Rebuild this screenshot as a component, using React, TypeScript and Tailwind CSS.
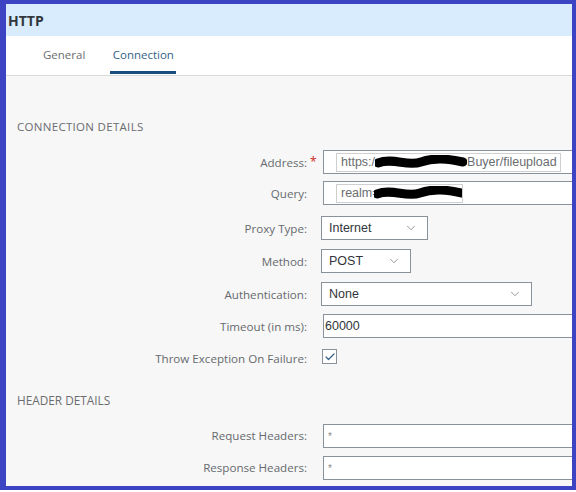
import { Check, ChevronDown } from "lucide-react";

const labelFont = { fontFamily: '"Open Sans", "Noto Sans", sans-serif' };
const fieldFont = { fontFamily: '"Liberation Sans", Arial, sans-serif' };

function Blob({ width }: { width: number }) {
  return (
    <svg width={width} height={14} viewBox={`0 0 ${width} 14`} className="shrink-0">
      <path
        d={`M3 8 C ${width * 0.2} 2, ${width * 0.35} 12, ${width * 0.5} 7 S ${width * 0.8} 4, ${width - 4} 7`}
        stroke="#000"
        strokeWidth={9}
        strokeLinecap="round"
        fill="none"
      />
    </svg>
  );
}

function Row({
  label,
  required,
  children,
  className = "",
}: {
  label: string;
  required?: boolean;
  children: React.ReactNode;
  className?: string;
}) {
  return (
    <div className={`flex items-center ${className}`}>
      <div
        className="w-[301px] shrink-0 text-right text-[11.6px] leading-[17px] text-[#666a6e]"
        style={labelFont}
      >
        {label}
      </div>
      <div className="w-[14px] shrink-0 pl-[3px] text-[12px] leading-none text-[#d0342c]">
        {required ? "*" : ""}
      </div>
      {children}
    </div>
  );
}

function Select({ value, width }: { value: string; width: number }) {
  return (
    <div
      className="flex h-[24px] shrink-0 items-center justify-between border border-[#89919a] bg-white pl-[7px] pr-[9px] text-[12.5px] text-[#32363a]"
      style={{ ...fieldFont, width }}
    >
      <span>{value}</span>
      <ChevronDown className="h-[14px] w-[14px] text-[#6a6d70]" strokeWidth={1.2} />
    </div>
  );
}

function TextBox({ children, className = "" }: { children?: React.ReactNode; className?: string }) {
  return (
    <div
      className={`ml-[2px] flex h-[24px] w-[260px] shrink-0 border border-[#89919a] bg-white ${className}`}
      style={fieldFont}
    >
      {children}
    </div>
  );
}

export default function App() {
  return (
    <div className="h-[492px] w-[576px] overflow-hidden bg-white">
      <div className="flex h-[490px] w-[576px] flex-col overflow-hidden border-b-4 border-l-[6px] border-r-4 border-t-4 border-[#3d44c4] bg-[#f7f7f7]">
        <div className="flex h-[32px] shrink-0 items-center bg-[#d9ecfd] pl-[2px]">
          <span className="text-[14px] font-bold text-[#32363a]" style={labelFont}>
            HTTP
          </span>
        </div>

        <div className="flex h-[40px] shrink-0 border-b border-[#d9d9d9] bg-white pl-[36px]" style={labelFont}>
          <div className="flex flex-col items-center px-[1px]">
            <span className="mt-[10px] text-[11.5px] text-[#6a6d70]">General</span>
          </div>
          <div className="ml-[24px] flex flex-col items-center">
            <span className="mt-[10px] px-[2px] text-[11.5px] text-[#346187]">Connection</span>
            <div className="mb-[1px] mt-auto h-[3px] w-[66px] bg-[#1b4d7e]" />
          </div>
        </div>

        <div className="flex flex-col">
          <div className="mt-[42px] pl-[11px] text-[11.5px] tracking-[0.3px] text-[#6a6d70]" style={labelFont}>
            CONNECTION DETAILS
          </div>

          <Row label="Address:" required className="mt-[15px]">
            <TextBox className="items-center pl-[12px]">
              <div className="flex h-[19px] items-center overflow-hidden border border-[#cfcfcf] pl-[4px] pr-[3px] text-[12.5px] text-[#6a6d70]">
                <span>https:/</span>
                <Blob width={92} />
                <span>Buyer/fileupload</span>
              </div>
            </TextBox>
          </Row>

          <Row label="Query:" className="mt-[7px]">
            <TextBox className="items-center pl-[12px]">
              <div className="flex h-[19px] w-[127px] items-center overflow-hidden border border-[#cfcfcf] pl-[4px] text-[12.5px] text-[#6a6d70]">
                <span>realm=</span>
                <span className="-ml-[6px]">
                  <Blob width={92} />
                </span>
              </div>
            </TextBox>
          </Row>

          <Row label="Proxy Type:" className="mt-[11px]">
            <Select value="Internet" width={107} />
          </Row>

          <Row label="Method:" className="mt-[9px]">
            <Select value="POST" width={90} />
          </Row>

          <Row label="Authentication:" className="mt-[9px]">
            <Select value="None" width={211} />
          </Row>

          <Row label="Timeout (in ms):" className="mt-[8px]">
            <TextBox className="items-center pl-[1px] text-[12.5px] text-[#32363a]">60000</TextBox>
          </Row>

          <Row label="Throw Exception On Failure:" className="mt-[12px]">
            <div className="ml-[1px] flex h-[15px] w-[15px] shrink-0 -translate-y-[2px] items-center justify-center border border-[#89919a] bg-white">
              <Check className="h-[12px] w-[12px] text-[#346187]" strokeWidth={2.4} />
            </div>
          </Row>

          <div className="mt-[25px] pl-[11px] text-[11.8px] text-[#6a6d70]" style={labelFont}>
            HEADER DETAILS
          </div>

          <Row label="Request Headers:" className="mt-[14px]">
            <TextBox className="items-start pl-[4px] pt-[4px] text-[10px] text-[#8a8a8a]">*</TextBox>
          </Row>

          <Row label="Response Headers:" className="mt-[8px]">
            <TextBox className="items-start pl-[4px] pt-[4px] text-[10px] text-[#8a8a8a]">*</TextBox>
          </Row>
        </div>
      </div>
    </div>
  );
}
